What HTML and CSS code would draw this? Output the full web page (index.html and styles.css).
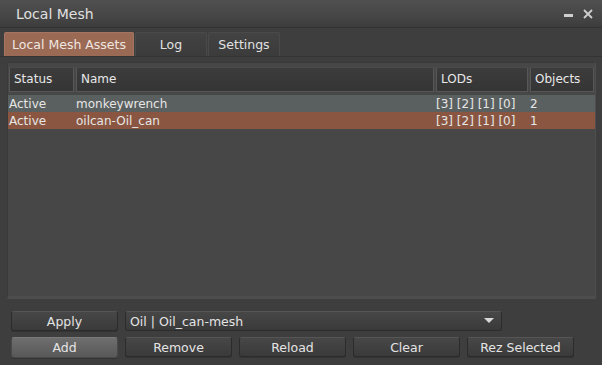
FILE: index.html
```html
<!DOCTYPE html>
<html lang="en">
<head>
    <meta charset="UTF-8">
    <title>Local Mesh</title>
    <link rel="stylesheet" href="styles.css">
</head>
<body>

<div class="window">
    <div class="titlebar">
        <span class="title">Local Mesh</span>
        <span class="controls">
            <svg width="11" height="11" viewBox="0 0 11 11"><rect x="1" y="6" width="9" height="3" fill="#cfcfcf"/></svg>
            <svg width="12" height="12" viewBox="0 0 12 12"><path d="M2 2 L10 10 M10 2 L2 10" stroke="#cfcfcf" stroke-width="1.8"/></svg>
        </span>
    </div>

    <div class="tabs">
        <div class="tab active">Local Mesh Assets</div>
        <div class="tab log">Log</div>
        <div class="tab">Settings</div>
    </div>

    <div class="panel">
        <div class="list">
            <div class="list-head">
                <div class="hcell c-status">Status</div>
                <div class="hcell c-name">Name</div>
                <div class="hcell c-lods">LODs</div>
                <div class="hcell c-obj">Objects</div>
            </div>
            <div class="row hover">
                <div class="cell c-status">Active</div>
                <div class="cell c-name">monkeywrench</div>
                <div class="cell c-lods">[3] [2] [1] [0]</div>
                <div class="cell c-obj">2</div>
            </div>
            <div class="row selected">
                <div class="cell c-status">Active</div>
                <div class="cell c-name">oilcan-Oil_can</div>
                <div class="cell c-lods">[3] [2] [1] [0]</div>
                <div class="cell c-obj">1</div>
            </div>
        </div>

        <div class="btn-row first">
            <button class="btn">Apply</button>
            <div class="combo">
                <span>Oil | Oil_can-mesh</span>
                <svg width="10" height="6" viewBox="0 0 10 6"><path d="M0 0 L10 0 L5 5 Z" fill="#d8d8d8"/></svg>
            </div>
        </div>
        <div class="btn-row">
            <button class="btn pressed">Add</button>
            <button class="btn">Remove</button>
            <button class="btn">Reload</button>
            <button class="btn">Clear</button>
            <button class="btn">Rez Selected</button>
        </div>
    </div>
</div>

</body>
</html>
```

FILE: styles.css
```css
body {
    margin: 0;
    padding: 0;
    background-color: #3d3d3d;
    font-family: "DejaVu Sans", sans-serif;
    font-size: 12px;
    color: #e6e6e6;
}
.window {
    width: 602px;
    height: 365px;
    overflow: hidden;
    background-color: #3e3e3e;
}
.titlebar {
    height: 28px;
    display: flex;
    align-items: center;
    justify-content: space-between;
    padding: 0 8px 0 16px;
    box-sizing: border-box;
    background: linear-gradient(#505050, #444444 70%, #3c3c3c);
    border-bottom: 1px solid #333;
}
.title {
    font-size: 14px;
    color: #e0e0e0;
    margin-top: 1px;
}
.controls {
    display: flex;
    gap: 8px;
    align-items: center;
}
.tabs {
    display: flex;
    padding: 4px 0 0 4px;
    height: 24px;
}
.tab {
    width: 72px;
    box-sizing: border-box;
    text-align: center;
    line-height: 24px;
    font-size: 12.5px;
    color: #e2e2e2;
    background: linear-gradient(#434343, #3b3b3b);
    border: 1px solid #4a4a4a;
    border-bottom: none;
    border-radius: 2px 2px 0 0;
    margin-right: 1px;
}
.tab.active {
    width: 130px;
    background: #9a6a55;
    border-color: #a37562;
    color: #f0e6e0;
}
.panel {
    border-top: 1px solid #343434;
    padding: 5px 6px 0 7px;
}
.list {
    height: 233px;
    background-color: #474747;
    border: 1px solid #3a3a3a;
    border-right-color: #4e4e4e;
    border-bottom: 3px solid #4d4d4d;
}
.list-head {
    display: flex;
    padding: 4px 0 0 1px;
    gap: 2px;
    height: 25px;
    margin-bottom: 3px;
}
.hcell {
    box-sizing: border-box;
    height: 25px;
    line-height: 23px;
    padding-left: 4px;
    background: linear-gradient(#3c3c3c, #353535);
    border: 1px solid #575757;
    border-top-color: #4a4a4a;
    color: #e8e8e8;
}
.c-status { width: 65px; }
.c-name { width: 358px; }
.c-lods { width: 92px; }
.c-obj { width: 64px; }
.row {
    display: flex;
    gap: 2px;
    height: 17px;
    line-height: 18px;
    padding-left: 1px;
}
.row .cell {
    white-space: nowrap;
}
.row .c-name { padding-left: 0; }
.row.hover {
    background-color: #5a5f5f;
}
.row.selected {
    background-color: #8b5641;
}
.btn-row {
    display: flex;
    gap: 7px;
    padding-left: 4px;
    margin-top: 6px;
}
.btn-row.first {
    margin-top: 12px;
}
.btn {
    width: 107px;
    height: 20px;
    padding: 0;
    font-family: "DejaVu Sans", sans-serif;
    font-size: 12.5px;
    color: #e4e4e4;
    background: linear-gradient(#474747, #3a3a3a);
    border: 1px solid #2c2c2c;
    border-top-color: #555;
    border-radius: 3px;
    box-shadow: 0 1px 0 #333;
}
.btn.pressed {
    height: 21px;
    background: linear-gradient(#6e6e6e, #585858);
    border-color: #4a4a4a;
    border-top-color: #7a7a7a;
}
.combo {
    width: 377px;
    height: 20px;
    box-sizing: border-box;
    display: flex;
    align-items: center;
    justify-content: space-between;
    padding: 0 7px 0 4px;
    font-size: 12.5px;
    color: #e4e4e4;
    background: linear-gradient(#474747, #3a3a3a);
    border: 1px solid #2c2c2c;
    border-top-color: #555;
    border-radius: 3px;
}
```
